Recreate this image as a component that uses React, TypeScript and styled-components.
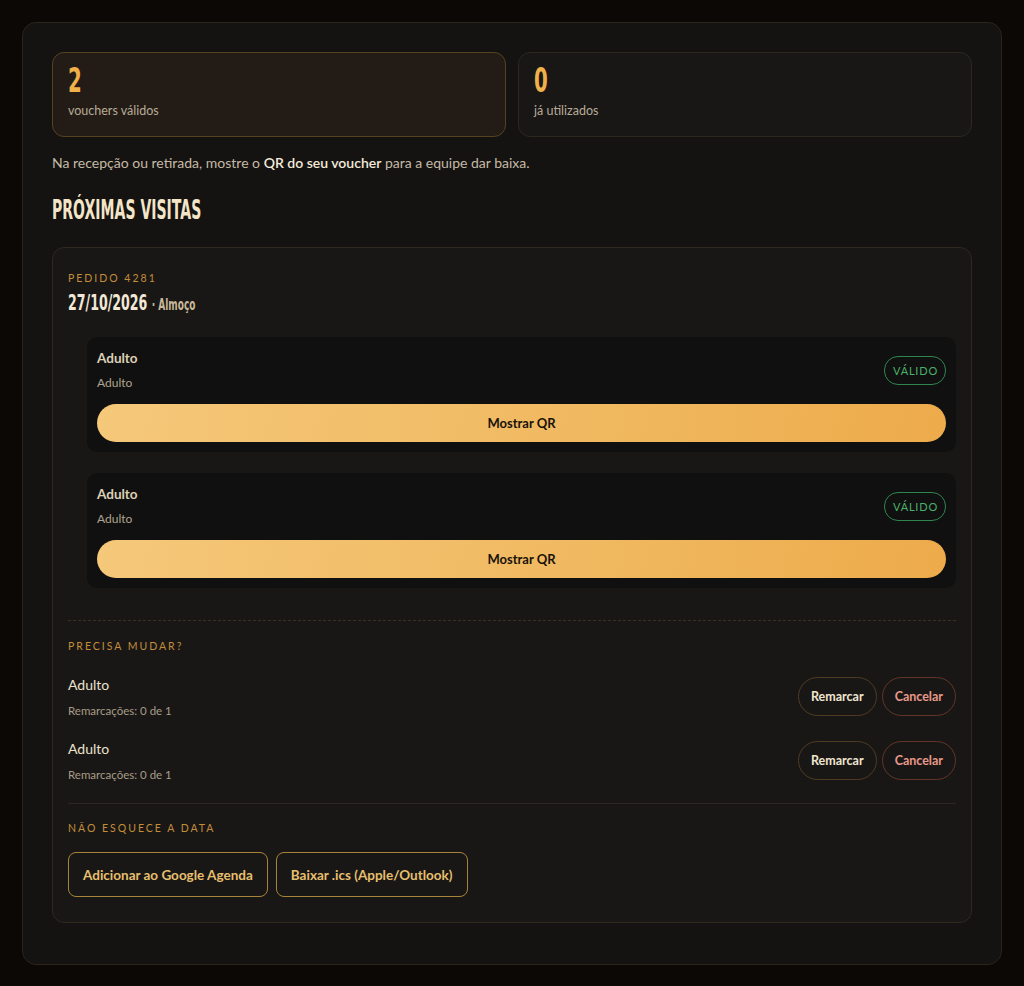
import styled, { createGlobalStyle } from 'styled-components'

const GlobalStyle = createGlobalStyle`
  html, body {
    margin: 0;
    padding: 0;
    background: #0c0806;
  }
  body {
    font-family: 'Lato', 'Noto Sans', sans-serif;
    color: #e8dcc6;
  }
  * { box-sizing: border-box; }
`

// no condensed display face is installed, so squeeze a bold one horizontally
const condensed = `
  display: inline-block;
  font-family: 'DejaVu Sans', 'Liberation Sans', sans-serif;
  font-weight: 700;
  transform: scaleX(0.6);
  transform-origin: left center;
  white-space: nowrap;
`

const Page = styled.div`
  padding: 22px 22px 21px 22px;
  min-height: 986px;
`

const Panel = styled.div`
  background: #141312;
  border: 1px solid #2c2418;
  border-radius: 14px;
  padding: 29px 29px 41px 29px;
`

const Stats = styled.div`
  display: grid;
  grid-template-columns: 1fr 1fr;
  gap: 12px;
`

const StatCard = styled.div<{ $active?: boolean }>`
  height: 85px;
  border-radius: 12px;
  padding: 10px 15px;
  background: ${({ $active }) => ($active ? '#231c16' : '#181716')};
  border: 1px solid ${({ $active }) => ($active ? '#57421f' : '#2c271f')};
`

const StatNumber = styled.div`
  ${condensed}
  font-size: 33px;
  line-height: 36px;
  color: #f0b04a;
`

const StatLabel = styled.div`
  margin-top: 4px;
  font-size: 12.5px;
  color: #b7ab97;
`

const Info = styled.p`
  margin: 17px 0 0;
  font-size: 14px;
  color: #c6baa5;

  strong {
    font-weight: 600;
    color: #f4ead9;
  }
`

const Heading = styled.h2`
  margin: 22px 0 0;
  font-size: 27px;
  line-height: 32px;
  color: #f3e5c8;

  span {
    ${condensed}
    transform: scaleX(0.52);
  }
`

const OrderCard = styled.div`
  margin-top: 21px;
  background: #181716;
  border: 1px solid #2f281d;
  border-radius: 12px;
  padding: 24px 15px 25px 15px;
`

const Eyebrow = styled.div`
  font-size: 10.5px;
  letter-spacing: 2px;
  text-transform: uppercase;
  color: #c48d3a;
`

const DateLine = styled.div`
  margin-top: 6px;
  font-size: 21px;
  line-height: 24px;
  color: #f2e8d6;

  > span {
    ${condensed}
    transform: scaleX(0.6);
  }

  small {
    font-size: 15px;
    color: #c9b898;
  }
`

const VoucherList = styled.div`
  margin: 20px 0 0 19px;
  display: flex;
  flex-direction: column;
  gap: 21px;
`

const Voucher = styled.div`
  background: #111010;
  border-radius: 10px;
  padding: 13px 10px 10px 10px;
`

const VoucherHead = styled.div`
  display: flex;
  justify-content: space-between;
  align-items: center;
`

const VoucherTitle = styled.div`
  font-size: 13.5px;
  font-weight: 700;
  color: #ddd0b6;
`

const VoucherSub = styled.div`
  margin-top: 9px;
  font-size: 12px;
  color: #afa38f;
`

const Badge = styled.span`
  border: 1px solid #2f8550;
  color: #4bb06a;
  border-radius: 14px;
  padding: 7px 7px 7px 8px;
  font-size: 11px;
  line-height: 13px;
  letter-spacing: 0.8px;
`

const QrButton = styled.button`
  display: block;
  margin-top: 14px;
  width: 100%;
  height: 38px;
  border: none;
  border-radius: 19px;
  background: linear-gradient(100deg, #f5c87a 0%, #f0b85f 60%, #edab4b 100%);
  font-family: inherit;
  font-size: 13px;
  font-weight: 700;
  color: #1a1209;
`

const Divider = styled.hr<{ $dashed?: boolean }>`
  margin: 0;
  border: none;
  border-top: 1px ${({ $dashed }) => ($dashed ? 'dashed #3a3125' : 'solid #2c2720')};
`

const Section = styled.div<{ $top: number }>`
  margin-top: ${({ $top }) => $top}px;
`

const ChangeList = styled.div`
  margin-top: 24px;
  display: flex;
  flex-direction: column;
  gap: 23px;
`

const ChangeRow = styled.div`
  display: flex;
  justify-content: space-between;
  align-items: center;
`

const RowTitle = styled.div`
  font-size: 14px;
  color: #ece1cc;
`

const RowSub = styled.div`
  margin-top: 11px;
  font-size: 11.5px;
  color: #a89c87;
`

const Actions = styled.div`
  display: flex;
  gap: 5px;
`

const PillButton = styled.button<{ $danger?: boolean }>`
  height: 39px;
  padding: 0 12px;
  border-radius: 20px;
  background: transparent;
  border: 1px solid ${({ $danger }) => ($danger ? '#643428' : '#4f3c22')};
  color: ${({ $danger }) => ($danger ? '#e8998a' : '#f1e5cf')};
  font-family: inherit;
  font-size: 12.5px;
  font-weight: 700;
`

const CalendarRow = styled.div`
  display: flex;
  gap: 8px;
  margin-top: 18px;
`

const CalendarButton = styled.button`
  height: 45px;
  padding: 0 14px;
  border-radius: 8px;
  background: transparent;
  border: 1px solid #a8843a;
  color: #e6bf6e;
  font-family: inherit;
  font-size: 13.5px;
  font-weight: 700;
`

const vouchers = [1, 2]

export default function App() {
  return (
    <>
      <GlobalStyle />
      <Page>
        <Panel>
          <Stats>
            <StatCard $active>
              <StatNumber>2</StatNumber>
              <StatLabel>vouchers válidos</StatLabel>
            </StatCard>
            <StatCard>
              <StatNumber>0</StatNumber>
              <StatLabel>já utilizados</StatLabel>
            </StatCard>
          </Stats>
          <Info>
            Na recepção ou retirada, mostre o <strong>QR do seu voucher</strong> para a equipe dar baixa.
          </Info>
          <Heading>
            <span>PRÓXIMAS VISITAS</span>
          </Heading>
          <OrderCard>
            <Eyebrow>Pedido 4281</Eyebrow>
            <DateLine>
              <span>
                27/10/2026 <small>· Almoço</small>
              </span>
            </DateLine>
            <VoucherList>
              {vouchers.map((v) => (
                <Voucher key={v}>
                  <VoucherHead>
                    <div>
                      <VoucherTitle>Adulto</VoucherTitle>
                      <VoucherSub>Adulto</VoucherSub>
                    </div>
                    <Badge>VÁLIDO</Badge>
                  </VoucherHead>
                  <QrButton>Mostrar QR</QrButton>
                </Voucher>
              ))}
            </VoucherList>
            <Section $top={32}>
              <Divider $dashed />
            </Section>
            <Section $top={19}>
              <Eyebrow>Precisa mudar?</Eyebrow>
              <ChangeList>
                {vouchers.map((v) => (
                  <ChangeRow key={v}>
                    <div>
                      <RowTitle>Adulto</RowTitle>
                      <RowSub>Remarcações: 0 de 1</RowSub>
                    </div>
                    <Actions>
                      <PillButton>Remarcar</PillButton>
                      <PillButton $danger>Cancelar</PillButton>
                    </Actions>
                  </ChangeRow>
                ))}
              </ChangeList>
            </Section>
            <Section $top={22}>
              <Divider />
            </Section>
            <Section $top={18}>
              <Eyebrow>Não esquece a data</Eyebrow>
              <CalendarRow>
                <CalendarButton>Adicionar ao Google Agenda</CalendarButton>
                <CalendarButton>Baixar .ics (Apple/Outlook)</CalendarButton>
              </CalendarRow>
            </Section>
          </OrderCard>
        </Panel>
      </Page>
    </>
  )
}
